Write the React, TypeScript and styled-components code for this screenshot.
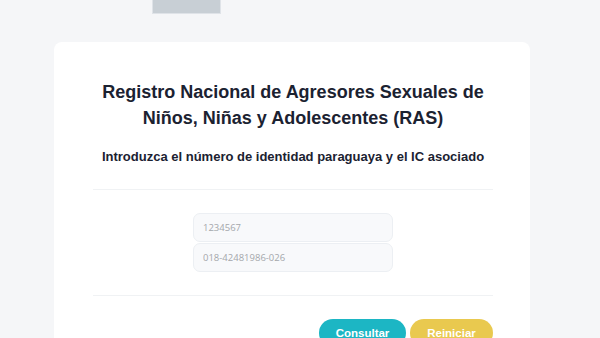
import React from 'react';
import styled, { createGlobalStyle } from 'styled-components';

const GlobalStyle = createGlobalStyle`
  body {
    margin: 0;
    background: #f5f6f8;
    font-family: "Liberation Sans", Arial, sans-serif;
  }
`;

const TopBar = styled.header`
  height: 42px;
  padding-left: 152px;
`;

const LogoBox = styled.div`
  width: 69px;
  height: 14px;
  background: #c8cfd5;
  box-sizing: border-box;
  border: 1px solid #dfe3e8;
  border-top: none;
`;

const Card = styled.main`
  margin-left: 54px;
  width: 476px;
  background: #ffffff;
  border-radius: 8px;
  padding: 37px 37px 30px 39px;
  box-sizing: border-box;
  min-height: 320px;
`;

const Title = styled.h1`
  margin: 0;
  font-size: 18px;
  line-height: 26px;
  font-weight: 700;
  color: #1b2231;
  text-align: center;
  white-space: nowrap;
`;

const Subtitle = styled.h2`
  margin: 17px 0 0;
  font-size: 13px;
  line-height: 18px;
  font-weight: 700;
  color: #1b2231;
  text-align: center;
  white-space: nowrap;
`;

const Divider = styled.hr<{ $top: number }>`
  margin: ${(p) => p.$top}px 0 0;
  border: none;
  border-top: 1px solid #f0f2f4;
  height: 0;
`;

const Fields = styled.div`
  margin-top: 23px;
  display: flex;
  flex-direction: column;
  align-items: center;
  gap: 1px;
`;

const Input = styled.input`
  width: 200px;
  height: 29px;
  box-sizing: border-box;
  padding: 0 9px;
  border: 1px solid #eceff3;
  border-radius: 7px;
  background: #f8f9fb;
  font-family: "Open Sans", sans-serif;
  font-size: 9.5px;
  color: #333;
  outline: none;

  &::placeholder {
    color: #a4a7ab;
  }
`;

const Actions = styled.div`
  margin-top: 23px;
  display: flex;
  justify-content: flex-end;
  gap: 4px;
`;

const Button = styled.button<{ $color: string; $width: number }>`
  width: ${(p) => p.$width}px;
  height: 28px;
  border: none;
  border-radius: 14px;
  background: ${(p) => p.$color};
  color: #ffffff;
  font-family: "Liberation Sans", Arial, sans-serif;
  font-weight: 700;
  font-size: 11.5px;
  padding: 0;
  cursor: pointer;
`;

export default function App() {
  return (
    <>
      <GlobalStyle />
      <TopBar>
        <LogoBox />
      </TopBar>
      <Card>
        <Title>
          Registro Nacional de Agresores Sexuales de
          <br />
          Niños, Niñas y Adolescentes (RAS)
        </Title>
        <Subtitle>Introduzca el número de identidad paraguaya y el IC asociado</Subtitle>
        <Divider $top={23} />
        <Fields>
          <Input placeholder="1234567" />
          <Input placeholder="018-42481986-026" />
        </Fields>
        <Divider $top={23} />
        <Actions>
          <Button $color="#1cb6c4" $width={87}>Consultar</Button>
          <Button $color="#e9c94f" $width={83}>Reiniciar</Button>
        </Actions>
      </Card>
    </>
  );
}
